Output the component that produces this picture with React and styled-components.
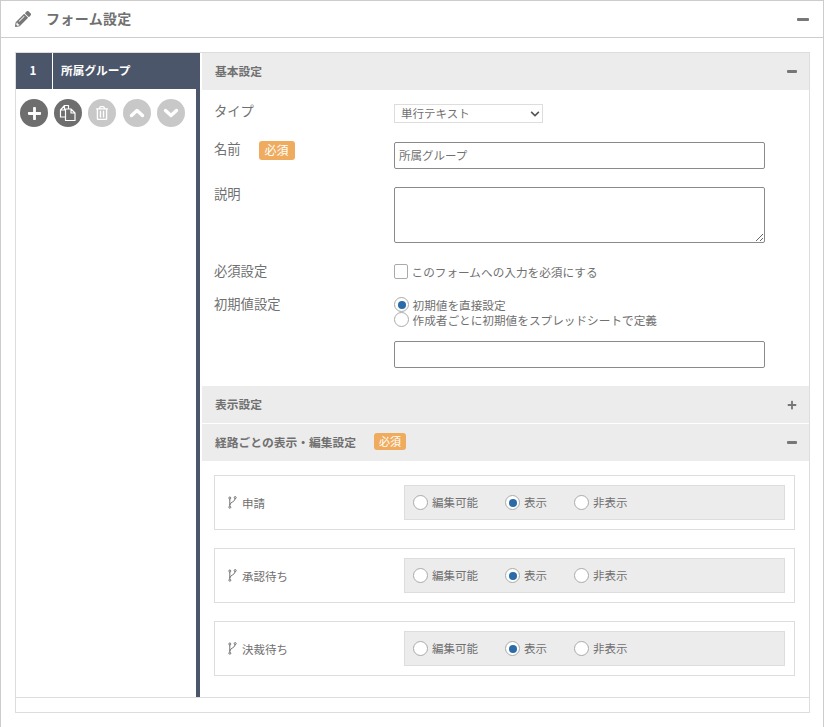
import React from 'react';
import styled, { createGlobalStyle } from 'styled-components';
import { FaPencilAlt, FaPlus, FaChevronDown, FaRegTrashAlt } from 'react-icons/fa';

const Global = createGlobalStyle`
    html, body { margin: 0; padding: 0; background: #fff; }
    body {
        font-family: "Noto Sans CJK JP", "Noto Sans", sans-serif;
        color: #707070;
        overflow: hidden;
    }
    * { box-sizing: border-box; }
`

const Panel = styled.div`
    width: 824px;
    height: 727px;
    border: 1px solid #ccc;
    border-bottom: none;
`

const PanelHead = styled.div`
    height: 37px;
    border-bottom: 1px solid #ccc;
    display: flex;
    align-items: center;
    padding: 0 14px 0 14px;
    h1 {
        margin: -2px 0 0 15px;
        font-size: 14px;
        letter-spacing: .35px;
        font-weight: 700;
        color: #707070;
        flex-grow: 1;
    }
`

const Bar = styled.span`
    display: block;
    width: ${p => p.$w || 10}px;
    height: 3px;
    background: #777;
    border-radius: 1px;
`

const Frame = styled.div`
    margin: 14px 13px 0 14px;
    width: 795px;
    height: 661px;
    border: 1px solid #ddd;
`

const Columns = styled.div`
    display: flex;
    height: 645px;
    border-bottom: 1px solid #ddd;
`

const Side = styled.div`
    width: 184px;
    flex-shrink: 0;
    border-right: 4px solid #4b566a;
    margin-right: 2px;
`

const Tab = styled.div`
    height: 36px;
    margin-right: -4px;
    background: #4b566a;
    color: #fff;
    display: flex;
    align-items: center;
    font-size: 11.7px;
    font-weight: 700;
    .num {
        width: 37px;
        height: 100%;
        border-right: 1px solid #fff;
        display: flex;
        align-items: center;
        justify-content: center;
        padding: 0 2px 3px 0;
    }
    .name { margin: -3px 0 0 8px; }
`

const Tools = styled.div`
    display: flex;
    gap: 6.2px;
    padding: 10px 0 0 4px;
`

const Tool = styled.span`
    width: 28px;
    height: 28px;
    border-radius: 50%;
    background: ${p => p.$off ? '#c8c8c8' : '#6e6e6e'};
    color: #fff;
    display: flex;
    align-items: center;
    justify-content: center;
    font-size: ${p => p.$size || 14}px;
`

const Main = styled.div`
    flex-grow: 1;
    min-width: 0;
`

const SectionHead = styled.div`
    height: 37px;
    background: #ececec;
    margin-bottom: ${p => p.$gap || 0}px;
    display: flex;
    align-items: center;
    padding: 0 12px 0 13px;
    font-size: 11.75px;
    font-weight: 700;
    color: #707070;
    .title {
        flex-grow: 1;
        display: flex;
        align-items: center;
        margin-top: -3px;
    }
`

const Badge = styled.span`
    display: inline-flex;
    align-items: center;
    justify-content: center;
    background: #f0ac5e;
    color: #fff;
    border-radius: 3px;
    font-size: ${p => p.$small ? 11 : 12}px;
    font-weight: 400;
    width: ${p => p.$small ? 32 : 36}px;
    height: ${p => p.$small ? 17 : 19}px;
    margin-left: 18px;
    padding-bottom: 1px;
`

const Form = styled.div`
    padding: 14px 44px 18px 12px;
`

const Row = styled.div`
    display: flex;
    min-height: ${p => p.$h}px;
`

const Label = styled.div`
    width: 180px;
    flex-shrink: 0;
    font-size: 13.3px;
    line-height: 16px;
    margin-top: -1px;
    display: flex;
    align-items: flex-start;
`

const Field = styled.div`
    flex-grow: 1;
    min-width: 0;
`

const FakeSelect = styled.div`
    width: 149px;
    height: 19px;
    border: 1px solid #ddd;
    display: flex;
    align-items: center;
    justify-content: space-between;
    padding: 0 1px 2px 6px;
    font-size: 11.5px;
    color: #707070;
`

const TextInput = styled.input`
    display: block;
    width: 371px;
    height: 27px;
    margin-top: ${p => p.$mt || 0}px;
    border: 1px solid #8a8a8a;
    border-radius: 2px;
    padding: 0 4px 2px;
    font: 11.5px "Noto Sans CJK JP", sans-serif;
    color: #707070;
    outline: none;
`

const TextArea = styled.textarea`
    display: block;
    width: 371px;
    height: 56px;
    border: 1px solid #8a8a8a;
    border-radius: 2px;
    outline: none;
`

const Check = styled.span`
    width: 14px;
    height: 15px;
    border: 1px solid #aaa;
    border-radius: 2px;
    background: #fff;
    flex-shrink: 0;
`

const Circle = styled.span`
    width: 15px;
    height: 15px;
    border-radius: 50%;
    border: 1px solid #aaa;
    background: #fff;
    flex-shrink: 0;
    display: flex;
    align-items: center;
    justify-content: center;
    &::after {
        content: '';
        display: ${p => p.$on ? 'block' : 'none'};
        width: 8px;
        height: 8px;
        border-radius: 50%;
        background: #2a6ba8;
    }
`

const Choice = styled.label`
    display: flex;
    align-items: center;
    gap: ${p => p.$w ? 4 : 3.5}px;
    font-size: ${p => p.$small ? 11.5 : 11.65}px;
    line-height: 15px;
    color: #707070;
    width: ${p => p.$w ? p.$w + 'px' : 'auto'};
`

const Routes = styled.div`
    padding: 14px 14px 0 12px;
    display: flex;
    flex-direction: column;
    gap: 18px;
`

const RouteCard = styled.div`
    height: 55px;
    border: 1px solid #ddd;
    display: flex;
    align-items: center;
    padding: 0 9px 0 13px;
    .name {
        width: 176px;
        display: flex;
        align-items: center;
        gap: 5px;
        font-size: 11.5px;
        color: #707070;
    }
`

const RouteOptions = styled.div`
    flex-grow: 1;
    height: 35px;
    background: #ececec;
    border: 1px solid #ddd;
    display: flex;
    align-items: center;
    padding-left: 8px;
`

function BranchIcon() {
    return (
        <svg width="9" height="13" viewBox="0 0 9 13" fill="none" stroke="#707070" strokeWidth="1">
            <circle cx="1.8" cy="2" r="1" />
            <circle cx="1.8" cy="11.2" r="1" />
            <circle cx="7.2" cy="1.6" r="1" />
            <path d="M1.8 3v7M7.2 2.6c0 3.2-5.4 3.6-5.4 6.4" />
        </svg>
    );
}

function CopyIcon() {
    return (
        <svg width="18" height="18" viewBox="0 0 18 18" fill="none" stroke="#fff" strokeWidth="1.2" strokeLinejoin="round">
            <path d="M1.5 10.5V6l4-4.5h4v3.5M5.5 1.5V6h-4M1.5 10.5V13h4.5" />
            <path d="M6.5 5h5.5v4h4v7.5H6.5zM12 5l4 4" />
        </svg>
    );
}

function Chevron({ up }) {
    return (
        <svg width="16" height="10" viewBox="0 0 16 10" fill="none" stroke="#fff" strokeWidth="3.4" strokeLinecap="round" strokeLinejoin="round">
            <path d={up ? 'M2.5 7.5L8 2.5l5.5 5' : 'M2.5 2.5L8 7.5l5.5-5'} />
        </svg>
    );
}

const routes = ['申請', '承認待ち', '決裁待ち'];

export default function App() {
    return (
        <Panel>
            <Global />
            <PanelHead>
                <FaPencilAlt size={16} color="#777" />
                <h1>フォーム設定</h1>
                <Bar $w={12} />
            </PanelHead>
            <Frame>
                <Columns>
                    <Side>
                        <Tab>
                            <div className="num">1</div>
                            <div className="name">所属グループ</div>
                        </Tab>
                        <Tools>
                            <Tool $size={15}><FaPlus /></Tool>
                            <Tool><CopyIcon /></Tool>
                            <Tool $off $size={14}><FaRegTrashAlt /></Tool>
                            <Tool $off><Chevron up /></Tool>
                            <Tool $off><Chevron /></Tool>
                        </Tools>
                    </Side>
                    <Main>
                        <SectionHead>
                            <span className="title">基本設定</span>
                            <Bar />
                        </SectionHead>
                        <Form>
                            <Row $h={38}>
                                <Label>タイプ</Label>
                                <Field>
                                    <FakeSelect>
                                        単行テキスト
                                        <FaChevronDown size={10} color="#555" style={{ marginRight: 1, marginTop: 2 }} />
                                    </FakeSelect>
                                </Field>
                            </Row>
                            <Row $h={45}>
                                <Label>名前<Badge>必須</Badge></Label>
                                <Field>
                                    <TextInput defaultValue="所属グループ" />
                                </Field>
                            </Row>
                            <Row $h={77}>
                                <Label>説明</Label>
                                <Field>
                                    <TextArea />
                                </Field>
                            </Row>
                            <Row $h={33}>
                                <Label>必須設定</Label>
                                <Field>
                                    <Choice><Check />このフォームへの入力を必須にする</Choice>
                                </Field>
                            </Row>
                            <Row>
                                <Label>初期値設定</Label>
                                <Field>
                                    <Choice><Circle $on />初期値を直接設定</Choice>
                                    <Choice><Circle />作成者ごとに初期値をスプレッドシートで定義</Choice>
                                    <TextInput $mt={14} />
                                </Field>
                            </Row>
                        </Form>
                        <SectionHead $gap={1}>
                            <span className="title">表示設定</span>
                            <FaPlus size={10} color="#777" />
                        </SectionHead>
                        <SectionHead>
                            <span className="title">経路ごとの表示・編集設定<Badge $small>必須</Badge></span>
                            <Bar />
                        </SectionHead>
                        <Routes>
                            {routes.map(r => (
                                <RouteCard key={r}>
                                    <div className="name"><BranchIcon />{r}</div>
                                    <RouteOptions>
                                        <Choice $small $w={92}><Circle />編集可能</Choice>
                                        <Choice $small $w={69}><Circle $on />表示</Choice>
                                        <Choice $small $w={80}><Circle />非表示</Choice>
                                    </RouteOptions>
                                </RouteCard>
                            ))}
                        </Routes>
                    </Main>
                </Columns>
            </Frame>
        </Panel>
    );
}
